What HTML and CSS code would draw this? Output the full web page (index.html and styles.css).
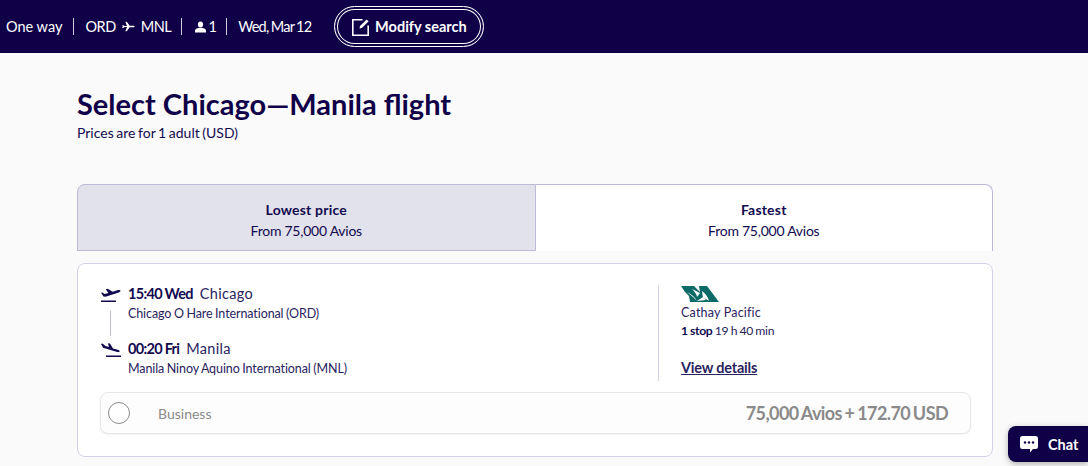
FILE: index.html
```html
<!DOCTYPE html>
<html lang="en">
<head>
<meta charset="utf-8">
<title>Select flight</title>
<link rel="stylesheet" href="styles.css">
</head>
<body>
<header class="topbar">
  <span class="seg seg-first">One way</span>
  <span class="seg seg-route">ORD
    <svg class="ico-plane" viewBox="0 0 14 12" width="13" height="11"><path fill="#fff" d="M0 4.500h1.300L2.600 5.400H5.300L3.600 .8h1.500L8.300 5.200h3.900c1 0 1.600.4 1.600.8s-.6.8-1.600.8H8.300l-3.200 4.400H3.600L5.300 6.600H2.600L1.300 7.500H0L.8 6z"/></svg>
    MNL</span>
  <span class="seg seg-pax"><svg class="ico-user" viewBox="0 0 12 12" width="11" height="12"><ellipse cx="6" cy="3.200" rx="2.800" ry="3.200" fill="#fff"/><path fill="#fff" d="M0 12V10C0 8 3 6.800 6 6.800s6 1.200 6 3.200v2z"/></svg><span class="pax-n">1</span></span>
  <span class="seg seg-last">Wed, Mar 12</span>
  <button class="modify"><svg viewBox="0 0 18 18" width="18" height="18"><path fill="none" stroke="#fff" stroke-width="1.600" d="M10.500 1.800H.8v15.400h15.400V7.500"/><path fill="#fff" d="M8 8 14.600 1.400l2 1.900-6.700 6.600-2.400.6z"/></svg>Modify search</button>
</header>
<main class="wrap">
  <h1 class="title">Select Chicago—Manila flight</h1>
  <p class="sub">Prices are for 1 adult (USD)</p>
  <div class="tabs">
    <div class="tab tab-active"><strong>Lowest price</strong><span>From 75,000 Avios</span></div>
    <div class="tab tab-idle"><strong>Fastest</strong><span>From 75,000 Avios</span></div>
  </div>
  <section class="card">
    <div class="top">
      <div class="legs">
        <div class="leg">
          <svg class="leg-ico" viewBox="0 0 20 15" width="20" height="15"><path fill="#120a4f" d="M2.500 8.500 0 4.800l1.500-.4 2 1.600 3.800-1L4.800 1.200l1.900-.5 5 3 5.300-1.600c1.200-.3 2.300-.1 2.500.5.200.7-.5 1.400-1.700 1.800L4.500 8.700zM0 12.500h15V14H0z"/></svg>
          <div><div class="leg-time"><b>15:40 Wed</b><span class="city">Chicago</span></div><div class="leg-air">Chicago O Hare International (ORD)</div></div>
        </div>
        <div class="leg-line"></div>
        <div class="leg">
          <svg class="leg-ico" viewBox="0 0 20 15" width="20" height="15"><path fill="#120a4f" d="M0 1 1.500.4l3 2.600 3.400 1L7 .2 9 .6l3 4.800 4.800 1.400c1.200.3 2 1 1.800 1.700-.2.600-1.200.8-2.400.5L2 4.700zM5 12.500h15V14H5z"/></svg>
          <div><div class="leg-time"><b>00:20 Fri</b><span class="city">Manila</span></div><div class="leg-air">Manila Ninoy Aquino International (MNL)</div></div>
        </div>
      </div>
      <div class="carrier">
        <svg class="logo" viewBox="0 0 38 16" width="38" height="16"><path fill="#0b6a66" d="M0 0H13L19 6 18 0H26L38 16H9L8 10 4 6z"/><path fill="#fff" d="M6 6c4 2 8 5 10 9l-4-4zM11 3c3 3 5 6 5 8l3-4zM21 5c4 3 6 6 7 10l-3-2-3-1z"/><path fill="#fff" d="M16 15l6-4 3 3z"/></svg>
        <div class="c-name">Cathay Pacific</div>
        <div class="c-stop"><b>1 stop</b> 19 h 40 min</div>
        <a class="details" href="#">View details</a>
      </div>
    </div>
    <div class="fare">
      <span class="radio"></span>
      <span class="cabin">Business</span>
      <span class="price">75,000 Avios + 172.70 USD</span>
    </div>
  </section>
</main>
<button class="chat"><svg viewBox="0 0 18 18" width="18" height="18"><path fill="#fff" d="M2.500 1h13A2.500 2.500 0 0 1 18 3.500v8a2.500 2.500 0 0 1-2.500 2.500H13l-3 3.500V14H2.500A2.500 2.500 0 0 1 0 11.500v-8A2.500 2.500 0 0 1 2.500 1z"/><circle cx="5" cy="7.500" r="1.200" fill="#120048"/><circle cx="9" cy="7.500" r="1.200" fill="#120048"/><circle cx="13" cy="7.500" r="1.200" fill="#120048"/></svg>Chat</button>
</body>
</html>
```
FILE: styles.css
```css
* { box-sizing: border-box; }
html, body { margin: 0; height: 100%; overflow: hidden; }
body { background: #fafafa; color: #120a4f; font-family: "Lato", "Liberation Sans", sans-serif; font-size: 14px; position: relative; }
.topbar { height: 53px; background: #0f0048; color: #fff; display: flex; align-items: center; padding: 0 0 0 6px; font-size: 14.500px; }
.seg { display: flex; align-items: center; height: 17px; padding: 0 11px; border-right: 1px solid #cfcbe0; gap: 6px; white-space: nowrap; }
.seg-first { padding-left: 0; }
.seg-route { letter-spacing: -.5px; padding-right: 10px; }
.seg-pax { gap: 4px; padding-left: 13px; }
.pax-n { width: 5px; display: flex; justify-content: center; }
.seg-last { border-right: 0; padding-right: 0; letter-spacing: -.7px; word-spacing: -1px; }
.ico-user, .ico-plane { flex: none; }
.modify { margin-left: 23px; width: 150px; height: 41px; border-radius: 21px; background: #0f0048; border: 1px solid #fff; box-shadow: inset 0 0 0 2px #0f0048, inset 0 0 0 3px #fff; color: #fff; font: 700 14.500px "Lato", sans-serif; display: flex; align-items: center; justify-content: center; gap: 5px; padding: 0; }
.wrap { width: 916px; margin: 0 0 0 77px; }
.title { margin: 32px 0 0; font-size: 29px; line-height: 38px; font-weight: 700; color: #0f0048; }
.sub { margin: 1px 0 0; font-size: 14px; line-height: 18px; word-spacing: -1px; }
.tabs { display: flex; height: 67px; margin-top: 42px; }
.tab { flex: 1; display: flex; flex-direction: column; align-items: center; justify-content: center; gap: 3px; border: 1px solid #bdbad8; padding-top: 6px; line-height: 18px; font-size: 14px; }
.tab strong { font-weight: 700; letter-spacing: .2px; }
.tab span { letter-spacing: -.25px; }
.tab-active { background: #e2e2ec; border-radius: 8px 0 0 0; }
.tab-idle { background: #fff; border-radius: 0 8px 0 0; border-left: 0; border-bottom: 0; padding-bottom: 1px; }
.card { margin-top: 12px; height: 194px; background: #fff; border: 1px solid #d3d1e6; border-radius: 8px; padding: 20px 21px 0 22px; display: flex; flex-direction: column; }
.top { display: flex; height: 97px; }
.legs { width: 558px; }
.leg { display: flex; gap: 7px; }
.leg-ico { flex: none; margin: 4px 0 0 1px; }
.leg-time { font-size: 14.500px; line-height: 20px; color: #2a2360; }
.leg-time b { color: #120a4f; letter-spacing: -.7px; }
.city { margin-left: 7px; letter-spacing: .3px; }
.leg-air { font-size: 12.500px; line-height: 18px; margin-top: 1px; color: #2a2360; letter-spacing: -.1px; word-spacing: -.5px; }
.leg-line { width: 1px; height: 25px; background: #bdbad8; margin: -12px 0 3px 10px; }
.carrier { border-left: 1px solid #d3d1e6; padding: 1px 0 0 22px; height: 96px; margin-top: 1px; font-size: 12.500px; color: #2a2360; display: flex; flex-direction: column; align-items: flex-start; }
.logo { display: block; margin-bottom: 2px; }
.c-name { line-height: 18px; letter-spacing: .2px; }
.c-stop { line-height: 18px; font-size: 12.200px; letter-spacing: -.3px; word-spacing: -.5px; }
.c-stop b { color: #120a4f; }
.details { margin-top: 19px; font-size: 14.500px; font-weight: 700; color: #2a2360; text-decoration: underline; letter-spacing: -.2px; }
.fare { margin-top: 11px; height: 42px; width: 871px; background: #fdfdfd; border: 1px solid #e6e6ea; border-radius: 8px; box-shadow: 0 1px 2px rgba(0,0,0,.05); display: flex; align-items: center; padding: 0 22px 0 7px; }
.radio { width: 22px; height: 22px; border: 1px solid #8a8a8a; border-radius: 50%; background: #fff; flex: none; }
.cabin { margin-left: 28px; font-size: 14px; color: #8a8a8a; }
.price { margin-left: auto; font-size: 18px; font-weight: 700; color: #8a8a8a; letter-spacing: -.6px; word-spacing: -1px; }
.chat { position: absolute; right: 0; top: 426px; width: 80px; height: 36px; background: #0f0048; border: 0; border-radius: 8px 0 0 8px; box-shadow: 0 2px 6px rgba(0,0,0,.3); color: #fff; font: 700 14.500px "Lato", sans-serif; display: flex; align-items: center; gap: 10px; padding: 0 0 0 12px; }
```
